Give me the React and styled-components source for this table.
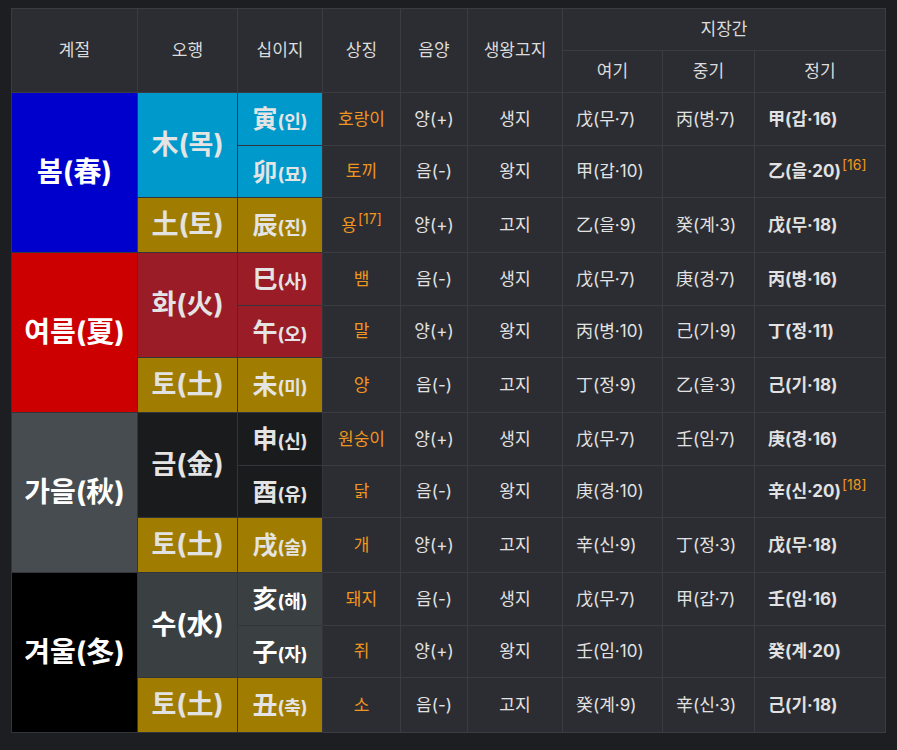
import React from "react"
import styled, { createGlobalStyle } from "styled-components"

const GlobalStyle = createGlobalStyle`
  html, body {
    margin: 0;
    background: #1d1e21;
  }
  body {
    font-family: Inter, "Noto Sans CJK KR", sans-serif;
    color: #e0e0e0;
  }
`

const Page = styled.div`
  padding: 8px 12px 17px 11px;
  background: #1d1e21;
`

const Table = styled.table`
  border-collapse: collapse;
  table-layout: fixed;
  width: 874px;
  background: #2c2d32;
  font-size: 17px;
  line-height: 1.3;
`

const Th = styled.th`
  border: 1px solid #3b3c42;
  font-weight: 400;
  color: #dcdcdc;
  height: ${props => props.h || 41}px;
  padding: 0 4px;
  text-align: center;
  vertical-align: middle;
`

const Td = styled.td`
  border: 1px solid #3b3c42;
  height: ${props => props.h}px;
  padding: 0 4px;
  padding-left: ${props => (props.left ? "13px" : "4px")};
  text-align: ${props => (props.left ? "left" : "center")};
  vertical-align: middle;
  white-space: nowrap;
  font-weight: ${props => (props.bold ? 700 : 400)};
  color: ${props => (props.orange ? "#f0961f" : "#e2e2e2")};
`

const ColorCell = styled.td`
  border: 1px solid #34353a;
  background: ${props => props.bg};
  color: ${props => props.fg || "#e2e2e2"};
  font-weight: 700;
  font-size: ${props => props.size || 27}px;
  text-align: center;
  vertical-align: middle;
  white-space: nowrap;
  height: ${props => props.h}px;
  padding: 0;
  line-height: 1.2;
`

const Reading = styled.span`
  font-size: 18px;
`

const Note = styled.sup`
  font-size: 14px;
  font-weight: 400;
  color: #f0961f;
  vertical-align: 7px;
  line-height: 0;
  margin-left: 1px;
`

const EARTH = "#a07d00"

const seasons = [
  {
    name: "봄(春)",
    bg: "#0000cd",
    element: "木(목)",
    elBg: "#0099cc",
    elFg: "#e4e4e4",
    earth: "土(토)",
    rows: [
      ["寅", "인", "호랑이", null, "양(+)", "생지", "戊(무·7)", "丙(병·7)", "甲(갑·16)", null],
      ["卯", "묘", "토끼", null, "음(-)", "왕지", "甲(갑·10)", "", "乙(을·20)", "16"],
      ["辰", "진", "용", "17", "양(+)", "고지", "乙(을·9)", "癸(계·3)", "戊(무·18)", null]
    ]
  },
  {
    name: "여름(夏)",
    bg: "#cc0000",
    element: "화(火)",
    elBg: "#991c26",
    elFg: "#e4e4e4",
    earth: "토(土)",
    rows: [
      ["巳", "사", "뱀", null, "음(-)", "생지", "戊(무·7)", "庚(경·7)", "丙(병·16)", null],
      ["午", "오", "말", null, "양(+)", "왕지", "丙(병·10)", "己(기·9)", "丁(정·11)", null],
      ["未", "미", "양", null, "음(-)", "고지", "丁(정·9)", "乙(을·3)", "己(기·18)", null]
    ]
  },
  {
    name: "가을(秋)",
    bg: "#474c50",
    element: "금(金)",
    elBg: "#1a1b1d",
    elFg: "#e4e4e4",
    earth: "토(土)",
    rows: [
      ["申", "신", "원숭이", null, "양(+)", "생지", "戊(무·7)", "壬(임·7)", "庚(경·16)", null],
      ["酉", "유", "닭", null, "음(-)", "왕지", "庚(경·10)", "", "辛(신·20)", "18"],
      ["戌", "술", "개", null, "양(+)", "고지", "辛(신·9)", "丁(정·3)", "戊(무·18)", null]
    ]
  },
  {
    name: "겨울(冬)",
    bg: "#000000",
    element: "수(水)",
    elBg: "#3a3f42",
    elFg: "#ffffff",
    earth: "토(土)",
    rows: [
      ["亥", "해", "돼지", null, "음(-)", "생지", "戊(무·7)", "甲(갑·7)", "壬(임·16)", null],
      ["子", "자", "쥐", null, "양(+)", "왕지", "壬(임·10)", "", "癸(계·20)", null],
      ["丑", "축", "소", null, "음(-)", "고지", "癸(계·9)", "辛(신·3)", "己(기·18)", null]
    ]
  }
]

const heights = [52, 51, 54]

function SeasonRows({ season }) {
  return season.rows.map((r, i) => {
    const [branch, reading, animal, animalNote, yy, stage, yeogi, junggi, jeonggi, note] = r
    const isEarth = i === 2
    const h = heights[i]
    return (
      <tr key={branch}>
        {i === 0 && (
          <ColorCell rowSpan={3} bg={season.bg} fg="#ffffff" size={28}>
            {season.name}
          </ColorCell>
        )}
        {i === 0 && (
          <ColorCell rowSpan={2} bg={season.elBg} fg={season.elFg}>
            {season.element}
          </ColorCell>
        )}
        {isEarth && (
          <ColorCell bg={EARTH} h={h}>
            {season.earth}
          </ColorCell>
        )}
        <ColorCell bg={isEarth ? EARTH : season.elBg} fg={isEarth ? "#e4e4e4" : season.elFg} size={25} h={h}>
          {branch}
          <Reading>({reading})</Reading>
        </ColorCell>
        <Td orange h={h}>
          {animal}
          {animalNote && <Note>[{animalNote}]</Note>}
        </Td>
        <Td h={h}>{yy}</Td>
        <Td h={h}>{stage}</Td>
        <Td left h={h}>{yeogi}</Td>
        <Td left h={h}>{junggi}</Td>
        <Td left bold h={h}>
          {jeonggi}
          {note && <Note>[{note}]</Note>}
        </Td>
      </tr>
    )
  })
}

export default function App() {
  return (
    <Page>
      <GlobalStyle />
      <Table>
        <colgroup>
          <col style={{ width: 126 }} />
          <col style={{ width: 100 }} />
          <col style={{ width: 85 }} />
          <col style={{ width: 78 }} />
          <col style={{ width: 67 }} />
          <col style={{ width: 95 }} />
          <col style={{ width: 100 }} />
          <col style={{ width: 92 }} />
          <col style={{ width: 131 }} />
        </colgroup>
        <thead>
          <tr>
            <Th rowSpan={2}>계절</Th>
            <Th rowSpan={2}>오행</Th>
            <Th rowSpan={2}>십이지</Th>
            <Th rowSpan={2}>상징</Th>
            <Th rowSpan={2}>음양</Th>
            <Th rowSpan={2}>생왕고지</Th>
            <Th colSpan={3}>지장간</Th>
          </tr>
          <tr>
            <Th>여기</Th>
            <Th>중기</Th>
            <Th>정기</Th>
          </tr>
        </thead>
        <tbody>
          {seasons.map(s => (
            <SeasonRows key={s.name} season={s} />
          ))}
        </tbody>
      </Table>
    </Page>
  )
}
